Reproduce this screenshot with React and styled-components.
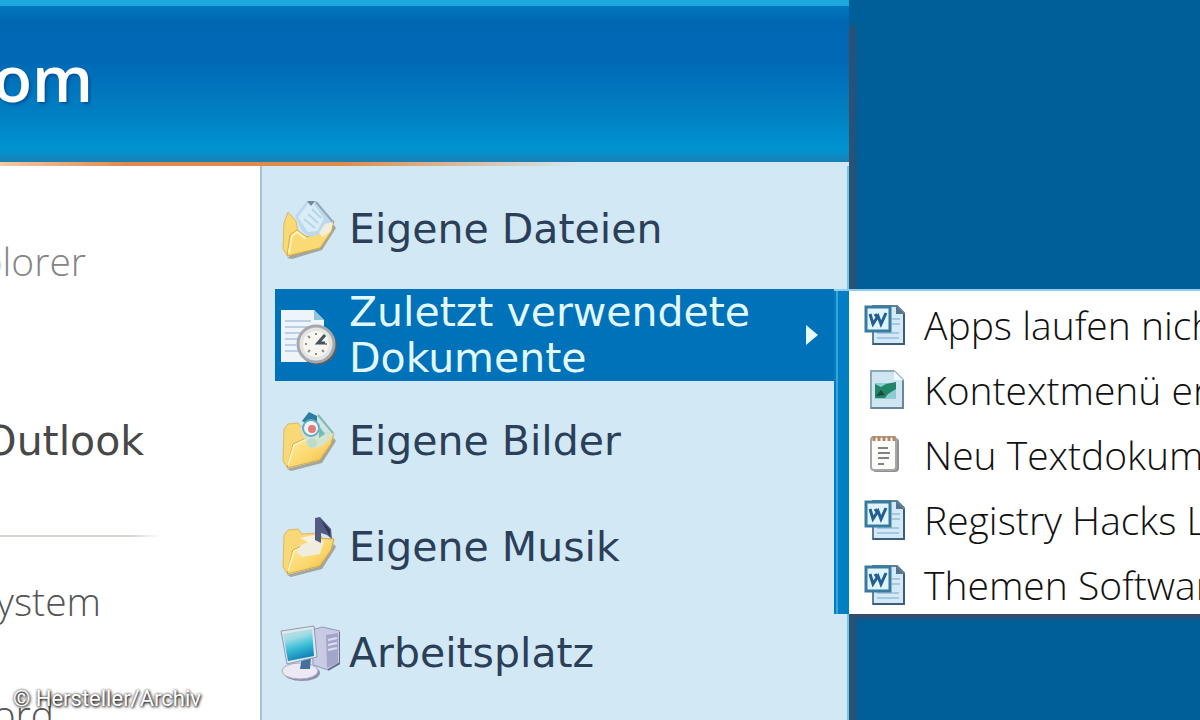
import styled, { createGlobalStyle } from "styled-components";

const GlobalStyle = createGlobalStyle`
    * {
        box-sizing: border-box;
    }
    body {
        margin: 0;
        overflow: hidden;
        font-family: 'DejaVu Sans', sans-serif;
    }
    ul {
        list-style: none;
        margin: 0;
        padding: 0;
    }
    button {
        border: 0;
        background: none;
        padding: 0;
        font: inherit;
        color: inherit;
        text-align: left;
    }
`

const programs = [
    { name: "plorer", end: 86, color: "#858585", height: 172 },
    { name: "Outlook", end: 144, color: "#484848", height: 190, big: true, last: true },
    { name: "ystem", end: 101, color: "#555", height: 128 },
    { name: "ord", end: 54, color: "#555", height: 98 },
];

const places = [
    { name: "Eigene Dateien", icon: <FilesIcon /> },
    { name: "Zuletzt verwendete Dokumente", icon: <RecentIcon />, open: true },
    { name: "Eigene Bilder", icon: <PicturesIcon /> },
    { name: "Eigene Musik", icon: <MusicIcon /> },
    { name: "Arbeitsplatz", icon: <ComputerIcon /> },
];

const documents = [
    { name: "Apps laufen nicht", icon: <WordIcon /> },
    { name: "Kontextmenü erweitern", icon: <ImageIcon /> },
    { name: "Neu Textdokument", icon: <TextIcon /> },
    { name: "Registry Hacks Liste", icon: <WordIcon /> },
    { name: "Themen Software", icon: <WordIcon /> },
];

export default function App() {
    return (
        <Desktop>
            <GlobalStyle />
            <StartMenu>
                <Header>
                    <User>om</User>
                </Header>
                <Body>
                    <Programs>
                        {programs.map((p) => (
                            <Program key={p.name} $height={p.height} $last={p.last}>
                                <ProgramName $end={p.end} $color={p.color} $big={p.big}>{p.name}</ProgramName>
                            </Program>
                        ))}
                    </Programs>
                    <Places>
                        {places.map((p) => (
                            <Place key={p.name}>
                                <PlaceButton $open={p.open}>
                                    {p.icon}
                                    <PlaceName>{p.name}</PlaceName>
                                    {p.open && <Arrow viewBox="0 0 12 20"><path d="M0 0L12 10L0 20Z" fill="#e4fbff" /></Arrow>}
                                </PlaceButton>
                                {p.open && <RecentMenu />}
                            </Place>
                        ))}
                    </Places>
                </Body>
            </StartMenu>
            <Credit>© Hersteller/Archiv</Credit>
        </Desktop>
    )
}

function RecentMenu() {
    return (
        <SubMenu>
            {documents.map((d) => (
                <li key={d.name}>
                    <Document>
                        {d.icon}
                        <span>{d.name}</span>
                    </Document>
                </li>
            ))}
        </SubMenu>
    )
}

function Folder({ children }) {
    return (
        <PlaceIcon viewBox="0 0 60 60">
            <defs>
                <linearGradient id="folder" x1="0" y1="0" x2="1" y2="1">
                    <stop offset="0" stopColor="#fff0a6" />
                    <stop offset="0.6" stopColor="#fbd568" />
                    <stop offset="1" stopColor="#e0a93a" />
                </linearGradient>
            </defs>
            <path d="M7 58L11 60L42 52L56 30L54 27L38 50Z" fill="#8e8a74" opacity="0.7" />
            <path d="M4 18L8 13L18 12L22 17L40 16L44 26L32 46L7 56L3 50Z" fill="#f8d877" stroke="#dcb965" />
            <path d="M7 57L13 33L31 25L36 21L54 22L51 33L40 49Z" fill="url(#folder)" stroke="#d7a544" />
            <path d="M8 54L14 34L31 26" fill="none" stroke="#fff5c4" strokeWidth="1.5" />
            {children}
        </PlaceIcon>
    )
}

function FilesIcon() {
    return (
        <PlaceIcon viewBox="0 0 60 60">
            <path d="M7 59L12 60L42 51L56 29L54 26Z" fill="#8e8a74" opacity="0.7" />
            <path d="M4 24L8 13L16 22L20 46L7 56L3 50Z" fill="#f9d973" stroke="#dcb965" />
            <path d="M7 57L10 36L17 31L27 38L38 34L46 25L54 22L51 33L40 49Z" fill="#fbd974" stroke="#dca941" />
            <path d="M9 54L12 37L17 33L26 40" fill="none" stroke="#fff4bd" strokeWidth="2" />
            <path d="M15 17L27 2L36 2L53 23L44 34L30 38L22 32Z" fill="#bfd9ec" />
            <path d="M36 3L53 23L50 27" fill="none" stroke="#91a9b9" strokeWidth="2" />
            <path d="M28 5L33 4L44 20L37 32L28 33L18 18Z" fill="#d8edf8" />
            <path d="M28 15L38 24M24 20L35 29M32 10L41 19" stroke="#b6d5e7" strokeWidth="2" />
            <path d="M27 2L31 7L35 2Z" fill="#71899b" />
            <path d="M45 25L53 23L51 32L43 38L39 34Z" fill="#f1efda" />
        </PlaceIcon>
    )
}

function PicturesIcon() {
    return (
        <Folder>
            <path d="M20 18L30 5L38 3L54 23L44 34L33 38L26 31Z" fill="#cce5df" opacity="0.85" />
            <path d="M38 4L53 22" stroke="#87b8b5" strokeWidth="2" />
            <path d="M22 10L29 1L37 5L37 11L27 13Z" fill="#2b7e9f" />
            <circle cx="31" cy="17" r="8" fill="#edf5fa" stroke="#69a9c4" strokeWidth="2" />
            <circle cx="32" cy="18" r="4" fill="#e37a76" />
            <path d="M39 15L45 23L39 27Z" fill="#70bdb9" />
            <circle cx="32" cy="32" r="5" fill="#bfdcca" />
        </Folder>
    )
}

function MusicIcon() {
    return (
        <Folder>
            <path d="M21 28L33 23L44 24L40 37L22 40L17 35Z" fill="#f0edde" />
            <path d="M20 21L34 18L37 22L30 26Z" fill="#f6f2df" />
            <path d="M35 23V1L40 0L51 12L52 22L47 18L41 16V26Z" fill="#535b83" />
            <path d="M41 3L50 13V20Z" fill="#303657" />
        </Folder>
    )
}

function RecentIcon() {
    return (
        <PlaceIcon viewBox="0 0 60 60">
            <path d="M1 5H34L44 15V57H1Z" fill="#edf5fb" />
            <path d="M34 5V15H44Z" fill="#8fc6dc" />
            <path d="M5 16H31M5 22H29M5 28H25M5 34H18M5 40H16M5 46H18" stroke="#bccfe8" strokeWidth="2" />
            <circle cx="38" cy="41" r="19" fill="#52606d" />
            <circle cx="36" cy="39" r="18" fill="#e4e4e2" stroke="#a5a9ad" strokeWidth="3" />
            <circle cx="36" cy="39" r="13" fill="#f6f5f0" />
            <path d="M36 28V30M36 48V50M25 39H27M45 39H47M28 31L30 33M42 45L44 47M28 47L30 45" stroke="#8a8f94" strokeWidth="2" />
            <path d="M45 30L38 38L45 38" fill="none" stroke="#45535f" strokeWidth="3" />
        </PlaceIcon>
    )
}

function ComputerIcon() {
    return (
        <PlaceIcon viewBox="0 0 60 60">
            <defs>
                <linearGradient id="screen" x1="0" y1="0" x2="0.3" y2="1">
                    <stop offset="0" stopColor="#c9dde9" />
                    <stop offset="0.35" stopColor="#a1dce6" />
                    <stop offset="0.65" stopColor="#3bbfd8" />
                    <stop offset="1" stopColor="#1486ba" />
                </linearGradient>
            </defs>
            <path d="M32 7L42 4L60 8V40L48 47L33 42Z" fill="#c9cbe4" stroke="#9298b8" />
            <path d="M46 12L58 10V40L47 45Z" fill="#a2a6c8" />
            <path d="M48 17L57 15M48 22L57 20M48 27L57 25" stroke="#dcdff0" strokeWidth="2" />
            <path d="M60 9V40L48 47" fill="none" stroke="#656d8d" strokeWidth="2" />
            <ellipse cx="22" cy="50" rx="18" ry="8" fill="#8d90aa" />
            <ellipse cx="20" cy="48" rx="18" ry="8" fill="#ece9f4" stroke="#aaa9c0" />
            <path d="M22 34L31 34L30 46L20 46Z" fill="#44709c" />
            <path d="M1 8L34 3L37 34L7 41Z" fill="#dfe7ef" stroke="#8d9caf" />
            <path d="M3 11L32 6L34 33L8 38Z" fill="url(#screen)" />
        </PlaceIcon>
    )
}

function WordIcon() {
    return (
        <DocumentIcon viewBox="0 0 42 42">
            <path d="M9 2H33L40 9V40H9Z" fill="#d4e9f7" stroke="#608097" strokeWidth="2" />
            <path d="M9 40H40V10" fill="none" stroke="#3b5f7b" strokeWidth="2" />
            <path d="M32 2V10H40Z" fill="#53758c" />
            <path d="M28 15H36M28 20H36M13 29H35M13 34H35" stroke="#a7c7df" strokeWidth="2" />
            <rect x="2" y="3" width="24" height="24" fill="#dff5ff" stroke="#397b9f" strokeWidth="3" />
            <path d="M6 10L9 20L14 12L17 20L22 9M11 10L13 13" fill="none" stroke="#235f92" strokeWidth="3" />
        </DocumentIcon>
    )
}

function ImageIcon() {
    return (
        <DocumentIcon viewBox="0 0 42 42">
            <path d="M7 2H30L39 11V39H7Z" fill="#cfe5ef" stroke="#8ba9bb" strokeWidth="2" />
            <path d="M7 39H39V12" fill="none" stroke="#66889d" strokeWidth="2" />
            <path d="M30 2V11H39Z" fill="#f1fbff" />
            <path d="M11 14H32V30H11Z" fill="#8ccdd4" />
            <path d="M11 15L17 18L22 15L32 13V20L24 25L21 29H11Z" fill="#218568" />
            <path d="M12 27L17 21L21 26Z" fill="#1d4939" />
        </DocumentIcon>
    )
}

function TextIcon() {
    return (
        <DocumentIcon viewBox="0 0 42 42">
            <rect x="8" y="4" width="27" height="34" rx="4" fill="#8f9092" />
            <rect x="7" y="3" width="25" height="33" rx="3" fill="#fcfcf8" stroke="#a7a7a7" strokeWidth="2" />
            <path d="M10 2V7M15 2V7M20 2V7M25 2V7M30 2V7" stroke="#b98561" strokeWidth="3" />
            <path d="M14 14H24M14 19H26M14 24H25M14 30H20" stroke="#828282" strokeWidth="2" />
        </DocumentIcon>
    )
}

const Desktop = styled.main`
    position: relative;
    display: grid;
    grid-template-columns: 849fr 351fr;
    height: 100vh;
    overflow: hidden;
    background: #005f99;
`

const StartMenu = styled.div`
    display: flex;
    flex-direction: column;
    min-width: 0;
    box-shadow: 4px 28px 6px 2px #33506b;
`

const Header = styled.header`
    display: flex;
    align-items: center;
    height: 162px;
    padding-bottom: 12px;
    border-top: 6px solid #1ba9dc;
    background: linear-gradient(#0077be, #0067b3 10%, #0069b5 35%, #0082c5 72%, #0093d2 92%, #1a80b4);
`

const User = styled.div`
    display: flex;
    justify-content: flex-end;
    width: 93px;
    font-family: 'Open Sans', sans-serif;
    font-weight: 600;
    font-size: 64px;
    line-height: 80px;
    color: #fff;
    text-shadow: 2px 2px 3px #00549b;
`

const Body = styled.div`
    flex: 1;
    display: grid;
    grid-template-columns: 260fr 589fr;
    border-top: 4px solid;
    border-image: linear-gradient(to right, #f3c9a6, #df8a4c 15%, #e08a48 40%, #d2e7f4 68%, #d2e7f4) 1;
`

const Programs = styled.ul`
    display: flex;
    flex-direction: column;
    padding-top: 9px;
    background: #fff;
`

const Program = styled.li`
    flex: none;
    display: flex;
    align-items: center;
    height: ${(props) => props.$height}px;
    border-bottom: ${(props) => props.$last ? "2px solid" : "0"};
    border-image: linear-gradient(to right, #d6d6cf 50%, #fff 62%) 1;
`

const ProgramName = styled.button`
    display: flex;
    justify-content: flex-end;
    width: ${(props) => props.$end}px;
    overflow: hidden;
    font-family: ${(props) => props.$big ? "'DejaVu Sans'" : "'Open Sans'"}, sans-serif;
    font-weight: ${(props) => props.$big ? 400 : 300};
    font-size: ${(props) => props.$big ? 41 : 39}px;
    line-height: 52px;
    color: ${(props) => props.$color};
`

const Places = styled.ul`
    display: flex;
    flex-direction: column;
    gap: 14px;
    padding: 17px 13px 0 13px;
    border-left: 2px solid #a9bfd2;
    border-right: 2px solid #6fc4ee;
    background: #d2e8f5;
`

const Place = styled.li`
    position: relative;
`

const PlaceButton = styled.button`
    display: flex;
    align-items: center;
    gap: 9px;
    width: 100%;
    height: 92px;
    padding: 0 16px 0 5px;
    font-size: 41px;
    line-height: 46px;
    color: ${(props) => props.$open ? "#e2f8ff" : "#2b3f59"};
    background: ${(props) => props.$open ? "#0072b9" : "none"};
`

const PlaceName = styled.span`
    flex: 1;
`

const PlaceIcon = styled.svg`
    flex: none;
    width: 60px;
    height: 60px;
`

const Arrow = styled.svg`
    width: 12px;
    height: 20px;
`

const SubMenu = styled.ul`
    position: absolute;
    z-index: 1;
    top: 0;
    left: 100%;
    display: flex;
    flex-direction: column;
    gap: 7px;
    width: 100vw;
    padding: 5px 0 0 30px;
    border-top: 2px solid #8dcdf0;
    box-shadow: 19px 4px 4px #3d4a68;
    background: linear-gradient(to right, #0080c3 2px, #3aa5dc 2px, #3aa5dc 4px, #0080c3 4px, #0080c3 15px, #fff 15px);
`

const Document = styled.button`
    display: flex;
    align-items: center;
    gap: 18px;
    width: 100%;
    height: 58px;
    font-family: 'Open Sans', sans-serif;
    font-weight: 300;
    font-size: 39px;
    line-height: 52px;
    color: #111;
    white-space: nowrap;
`

const DocumentIcon = styled.svg`
    flex: none;
    width: 42px;
    height: 42px;
`

const Credit = styled.small`
    position: absolute;
    z-index: 2;
    left: 13px;
    bottom: 8px;
    font-family: Roboto, sans-serif;
    font-size: 22px;
    line-height: 26px;
    color: #fff;
    text-shadow: 1px 1px 3px #000, 0 0 3px #444;
`
